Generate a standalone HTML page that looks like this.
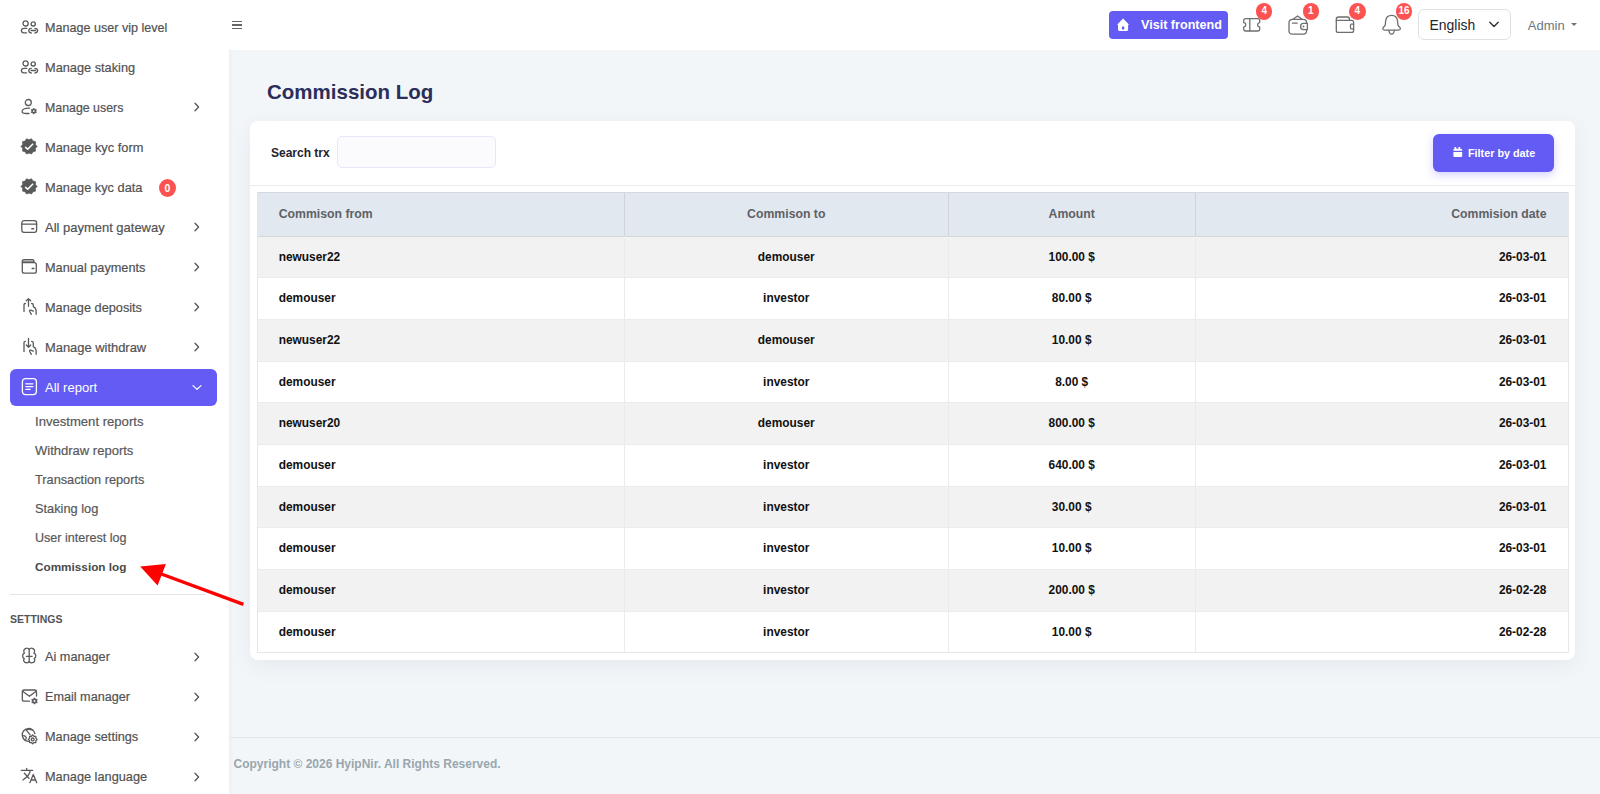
<!DOCTYPE html>
<html><head><meta charset="utf-8"><title>Commission Log</title>
<style>
html,body{margin:0;padding:0;}
body{width:1600px;height:794px;overflow:hidden;position:relative;background:#f3f6f9;font-family:"Liberation Sans", sans-serif;}
.t{position:absolute;white-space:nowrap;}
#sb{position:absolute;left:0;top:0;width:229px;height:794px;background:#fff;box-shadow:1px 0 4px rgba(0,0,0,0.04);}
#hd{position:absolute;left:229px;top:0;width:1371px;height:50px;background:#fff;}
</style></head>
<body>
<div id="sb"></div><div id="hd"></div>
<svg style="position:absolute;left:20px;top:17px;" width="20" height="20" viewBox="0 0 20 20" fill="none"><g stroke="#5a5a5a" stroke-width="1.3" stroke-linecap="round" stroke-linejoin="round">
<circle cx="5.6" cy="6.4" r="2.6"/><circle cx="13.2" cy="6.9" r="2.1"/>
<path d="M6.8 11.3H4Q1.4 11.3 1.4 13.6Q1.4 15.8 4 15.8H6.6"/>
<path d="M11.3 11.3Q8.8 11.3 8.8 13.6Q8.8 16 11.3 16"/>
<path d="M14.9 11.3Q17.6 11.3 17.6 13.6Q17.6 16 14.9 16"/>
<path d="M11.2 13.5H15.6"/></g></svg>
<div class="t" style="left:45px;top:22px;font-size:12.59px;line-height:12.59px;font-weight:400;color:#525252;-webkit-text-stroke:0.2px #525252;">Manage user vip level</div>
<svg style="position:absolute;left:20px;top:57px;" width="20" height="20" viewBox="0 0 20 20" fill="none"><g stroke="#5a5a5a" stroke-width="1.3" stroke-linecap="round" stroke-linejoin="round">
<circle cx="5.6" cy="6.4" r="2.6"/><circle cx="13.2" cy="6.9" r="2.1"/>
<path d="M6.8 11.3H4Q1.4 11.3 1.4 13.6Q1.4 15.8 4 15.8H6.6"/>
<path d="M11.3 11.3Q8.8 11.3 8.8 13.6Q8.8 16 11.3 16"/>
<path d="M14.9 11.3Q17.6 11.3 17.6 13.6Q17.6 16 14.9 16"/>
<path d="M11.2 13.5H15.6"/></g></svg>
<div class="t" style="left:45px;top:62px;font-size:12.78px;line-height:12.78px;font-weight:400;color:#525252;-webkit-text-stroke:0.2px #525252;">Manage staking</div>
<svg style="position:absolute;left:20px;top:97px;" width="20" height="20" viewBox="0 0 20 20" fill="none"><g stroke="#5a5a5a" stroke-width="1.3" stroke-linecap="round" stroke-linejoin="round">
<circle cx="8.3" cy="5.5" r="3"/>
<path d="M9.6 11.2H8.6C4.8 11.2 2.1 12.6 2.1 14.4C2.1 15.8 4.2 16.5 6.5 16.5H9"/>
</g>
<polygon points="13.80,11.00 12.70,12.19 11.12,12.55 11.60,14.10 11.12,15.65 12.70,16.01 13.80,17.20 14.90,16.01 16.48,15.65 16.00,14.10 16.48,12.55 14.90,12.19" fill="#5a5a5a" stroke="#5a5a5a" stroke-width="0.5" stroke-linejoin="round"/><circle cx="13.8" cy="14.1" r="0.9" fill="#fff"/></svg>
<div class="t" style="left:45px;top:102px;font-size:12.36px;line-height:12.36px;font-weight:400;color:#525252;-webkit-text-stroke:0.2px #525252;">Manage users</div>
<svg style="position:absolute;left:192px;top:102px;" width="10" height="10" viewBox="0 0 10 10" fill="none"><path d="M3 1.3L6.6 5L3 8.7" stroke="#555" stroke-width="1.3" stroke-linecap="round" stroke-linejoin="round"/></svg>
<svg style="position:absolute;left:20px;top:137px;" width="20" height="20" viewBox="0 0 20 20" fill="none"><polygon points="17.05,9.40 15.33,7.36 15.52,4.70 12.93,4.06 11.52,1.79 9.05,2.80 6.58,1.79 5.17,4.06 2.58,4.70 2.77,7.36 1.05,9.40 2.77,11.44 2.58,14.10 5.17,14.74 6.58,17.01 9.05,16.00 11.52,17.01 12.93,14.74 15.52,14.10 15.33,11.44" fill="#5a5a5a" stroke="#5a5a5a" stroke-width="0.8" stroke-linejoin="round"/>
<path d="M5.6 10.3L7.7 12.2L12.6 7.2" stroke="#fff" stroke-width="1.6" stroke-linecap="round" stroke-linejoin="round"/></svg>
<div class="t" style="left:45px;top:142px;font-size:12.84px;line-height:12.84px;font-weight:400;color:#525252;-webkit-text-stroke:0.2px #525252;">Manage kyc form</div>
<svg style="position:absolute;left:20px;top:177px;" width="20" height="20" viewBox="0 0 20 20" fill="none"><polygon points="17.05,9.40 15.33,7.36 15.52,4.70 12.93,4.06 11.52,1.79 9.05,2.80 6.58,1.79 5.17,4.06 2.58,4.70 2.77,7.36 1.05,9.40 2.77,11.44 2.58,14.10 5.17,14.74 6.58,17.01 9.05,16.00 11.52,17.01 12.93,14.74 15.52,14.10 15.33,11.44" fill="#5a5a5a" stroke="#5a5a5a" stroke-width="0.8" stroke-linejoin="round"/>
<path d="M5.6 10.3L7.7 12.2L12.6 7.2" stroke="#fff" stroke-width="1.6" stroke-linecap="round" stroke-linejoin="round"/></svg>
<div class="t" style="left:45px;top:182px;font-size:12.8px;line-height:12.8px;font-weight:400;color:#525252;-webkit-text-stroke:0.2px #525252;">Manage kyc data</div>
<svg style="position:absolute;left:20px;top:217px;" width="20" height="20" viewBox="0 0 20 20" fill="none"><g stroke="#5a5a5a" stroke-width="1.3" stroke-linecap="round" stroke-linejoin="round"><rect x="1.8" y="3.7" width="14.8" height="11.6" rx="2.2"/>
<path d="M1.8 7.2H16.6"/><path d="M11.8 11.8H13.6" stroke-width="1.5"/></g></svg>
<div class="t" style="left:45px;top:222px;font-size:12.97px;line-height:12.97px;font-weight:400;color:#525252;-webkit-text-stroke:0.2px #525252;">All payment gateway</div>
<svg style="position:absolute;left:192px;top:222px;" width="10" height="10" viewBox="0 0 10 10" fill="none"><path d="M3 1.3L6.6 5L3 8.7" stroke="#555" stroke-width="1.3" stroke-linecap="round" stroke-linejoin="round"/></svg>
<svg style="position:absolute;left:20px;top:257px;" width="20" height="20" viewBox="0 0 20 20" fill="none"><g stroke="#5a5a5a" stroke-width="1.3" stroke-linecap="round" stroke-linejoin="round">
<path d="M2.3 5.6V14.2Q2.3 16.2 4.3 16.2H14.3Q16.3 16.2 16.3 14.2V7.6Q16.3 5.6 14.3 5.6H2.3"/>
<path d="M2.3 5.6V4.5Q2.3 2.6 4.2 2.6H12.2Q14 2.6 14 4.6V5.6"/>
<path d="M2.6 4.2H13.6" stroke-width="1"/>
<path d="M12.2 11.5H13.9" stroke-width="1.5"/></g></svg>
<div class="t" style="left:45px;top:262px;font-size:12.72px;line-height:12.72px;font-weight:400;color:#525252;-webkit-text-stroke:0.2px #525252;">Manual payments</div>
<svg style="position:absolute;left:192px;top:262px;" width="10" height="10" viewBox="0 0 10 10" fill="none"><path d="M3 1.3L6.6 5L3 8.7" stroke="#555" stroke-width="1.3" stroke-linecap="round" stroke-linejoin="round"/></svg>
<svg style="position:absolute;left:20px;top:297px;" width="20" height="20" viewBox="0 0 20 20" fill="none"><g stroke="#5a5a5a" stroke-width="1.3" stroke-linecap="round" stroke-linejoin="round"><path d="M8.5 9.3V1.8M6.3 3.8L8.5 1.6L10.7 3.8"/>
<path d="M5.4 6.5Q4 6.5 4 7.7V14.6"/>
<path d="M11.6 6.5Q13.3 6.5 13.3 8.3V9.6Q16 11 16.1 13.2V17.3"/>
<path d="M13.3 14.2L10.8 13.1Q9.3 12.8 9.6 14.3L11.3 17.4"/></g></svg>
<div class="t" style="left:45px;top:302px;font-size:12.74px;line-height:12.74px;font-weight:400;color:#525252;-webkit-text-stroke:0.2px #525252;">Manage deposits</div>
<svg style="position:absolute;left:192px;top:302px;" width="10" height="10" viewBox="0 0 10 10" fill="none"><path d="M3 1.3L6.6 5L3 8.7" stroke="#555" stroke-width="1.3" stroke-linecap="round" stroke-linejoin="round"/></svg>
<svg style="position:absolute;left:20px;top:337px;" width="20" height="20" viewBox="0 0 20 20" fill="none"><g stroke="#5a5a5a" stroke-width="1.3" stroke-linecap="round" stroke-linejoin="round"><path d="M8.5 1.5V10.1M6.3 8.0L8.5 10.2L10.7 8.0"/>
<path d="M5.4 4.3Q4 4.3 4 5.5V14.6"/>
<path d="M11.6 4.3Q13.3 4.3 13.3 6.1V9.6Q16 11 16.1 13.2V17.3"/>
<path d="M13.3 14.2L10.8 13.1Q9.3 12.8 9.6 14.3L11.3 17.4"/></g></svg>
<div class="t" style="left:45px;top:342px;font-size:12.91px;line-height:12.91px;font-weight:400;color:#525252;-webkit-text-stroke:0.2px #525252;">Manage withdraw</div>
<svg style="position:absolute;left:192px;top:342px;" width="10" height="10" viewBox="0 0 10 10" fill="none"><path d="M3 1.3L6.6 5L3 8.7" stroke="#555" stroke-width="1.3" stroke-linecap="round" stroke-linejoin="round"/></svg>
<div style="position:absolute;left:159px;top:179px;width:17px;height:18px;border-radius:50%;background:#fd5252;"></div>
<div class="t" style="left:159px;top:183px;font-size:10.5px;line-height:10.5px;font-weight:700;color:#fff;width:17px;text-align:center;">0</div>
<div style="position:absolute;left:10px;top:369px;width:207px;height:36.5px;border-radius:6px;background:#635bf4;"></div>
<svg style="position:absolute;left:20px;top:377px;" width="20" height="20" viewBox="0 0 20 20" fill="none"><g stroke="#fff" stroke-width="1.3" stroke-linecap="round" stroke-linejoin="round">
<rect x="2.4" y="1.6" width="14" height="16" rx="3"/>
<path d="M5.8 6.8H12.9M5.8 9.6H12.9M5.8 12.3H10.2"/></g></svg>
<div class="t" style="left:45px;top:381px;font-size:13.05px;line-height:13.05px;font-weight:400;color:#fff;">All report</div>
<svg style="position:absolute;left:190px;top:382px;" width="14" height="10" viewBox="0 0 14 10" fill="none"><path d="M3 3.6L7 7.4L11 3.6" stroke="#fff" stroke-width="1.3" stroke-linecap="round" stroke-linejoin="round"/></svg>
<div class="t" style="left:35px;top:415px;font-size:13.1px;line-height:13.1px;font-weight:400;color:#585858;-webkit-text-stroke:0.2px #585858;">Investment reports</div>
<div class="t" style="left:35px;top:444px;font-size:13.03px;line-height:13.03px;font-weight:400;color:#585858;-webkit-text-stroke:0.2px #585858;">Withdraw reports</div>
<div class="t" style="left:35px;top:474px;font-size:12.75px;line-height:12.75px;font-weight:400;color:#585858;-webkit-text-stroke:0.2px #585858;">Transaction reports</div>
<div class="t" style="left:35px;top:503px;font-size:12.79px;line-height:12.79px;font-weight:400;color:#585858;-webkit-text-stroke:0.2px #585858;">Staking log</div>
<div class="t" style="left:35px;top:532px;font-size:12.57px;line-height:12.57px;font-weight:400;color:#585858;-webkit-text-stroke:0.2px #585858;">User interest log</div>
<div class="t" style="left:35px;top:561px;font-size:11.76px;line-height:11.76px;font-weight:700;color:#4a4a4a;">Commission log</div>
<div style="position:absolute;left:10px;top:594px;width:195px;height:1px;background:#e4e4e4;"></div>
<div class="t" style="left:10px;top:614px;font-size:10.5px;line-height:10.5px;font-weight:700;color:#555;letter-spacing:0px;">SETTINGS</div>
<svg style="position:absolute;left:20px;top:645.0px;" width="20" height="20" viewBox="0 0 20 20" fill="none"><g stroke="#5a5a5a" stroke-width="1.3" stroke-linecap="round" stroke-linejoin="round" stroke-width="1.35">
<path d="M9.2 4.4C8.4 3.2 6.6 2.9 5.4 3.6C3.6 4.6 3.2 6.6 4.5 8.2C2.3 8.9 1.7 12.2 4.3 13.5C3.0 14.9 3.6 17.5 6.0 17.7C7.2 18 8.6 17.7 9.2 16.7"/>
<path d="M9.2 4.4C10 3.2 11.8 2.9 13 3.6C14.8 4.6 15.2 6.6 13.9 8.2C16.1 8.9 16.7 12.2 14.1 13.5C15.4 14.9 14.8 17.5 12.4 17.7C11.2 18 9.8 17.7 9.2 16.7"/>
<path d="M9.2 4.4V16.7M6.4 11.4H12.1"/></g></svg>
<div class="t" style="left:45px;top:651px;font-size:12.69px;line-height:12.69px;font-weight:400;color:#525252;-webkit-text-stroke:0.2px #525252;">Ai manager</div>
<svg style="position:absolute;left:192px;top:651.8px;" width="10" height="10" viewBox="0 0 10 10" fill="none"><path d="M3 1.3L6.6 5L3 8.7" stroke="#555" stroke-width="1.3" stroke-linecap="round" stroke-linejoin="round"/></svg>
<svg style="position:absolute;left:20px;top:685.0px;" width="20" height="20" viewBox="0 0 20 20" fill="none"><g stroke="#5a5a5a" stroke-width="1.3" stroke-linecap="round" stroke-linejoin="round" stroke-width="1.4">
<path d="M9.6 16.1H4Q2.3 16.1 2.3 14.4V6.7Q2.3 5 4 5H14.8Q16.5 5 16.5 6.7V11"/>
<path d="M2.6 6.2L9.4 11.3L16.2 6.2"/></g>
<polygon points="14.50,12.70 13.35,14.01 11.64,14.35 12.20,16.00 11.64,17.65 13.35,17.99 14.50,19.30 15.65,17.99 17.36,17.65 16.80,16.00 17.36,14.35 15.65,14.01" fill="#5a5a5a" stroke="#5a5a5a" stroke-width="0.5" stroke-linejoin="round"/><circle cx="14.5" cy="16" r="0.9" fill="#fff"/></svg>
<div class="t" style="left:45px;top:691px;font-size:12.65px;line-height:12.65px;font-weight:400;color:#525252;-webkit-text-stroke:0.2px #525252;">Email manager</div>
<svg style="position:absolute;left:192px;top:691.8px;" width="10" height="10" viewBox="0 0 10 10" fill="none"><path d="M3 1.3L6.6 5L3 8.7" stroke="#555" stroke-width="1.3" stroke-linecap="round" stroke-linejoin="round"/></svg>
<svg style="position:absolute;left:20px;top:725.0px;" width="20" height="20" viewBox="0 0 20 20" fill="none"><g stroke="#5a5a5a" stroke-width="1.3" stroke-linecap="round" stroke-linejoin="round" stroke-width="1.2">
<path d="M8.4 16.3A6.4 6.4 0 1 1 14.9 8.6"/>
<path d="M5.6 4.4L10.2 9.8"/><path d="M6.8 4.8Q9 3.8 12.8 5.2"/>
<path d="M3 10.8Q4.8 10 6.2 12.5Q6.6 14 5 15"/>
<polygon points="12.70,10.00 11.40,11.26 9.59,11.29 9.56,13.10 8.30,14.40 9.56,15.70 9.59,17.51 11.40,17.54 12.70,18.80 14.00,17.54 15.81,17.51 15.84,15.70 17.10,14.40 15.84,13.10 15.81,11.29 14.00,11.26" fill="#fff"/>
<circle cx="12.7" cy="14.4" r="1.4"/></g></svg>
<div class="t" style="left:45px;top:731px;font-size:12.71px;line-height:12.71px;font-weight:400;color:#525252;-webkit-text-stroke:0.2px #525252;">Manage settings</div>
<svg style="position:absolute;left:192px;top:731.8px;" width="10" height="10" viewBox="0 0 10 10" fill="none"><path d="M3 1.3L6.6 5L3 8.7" stroke="#555" stroke-width="1.3" stroke-linecap="round" stroke-linejoin="round"/></svg>
<svg style="position:absolute;left:20px;top:765.0px;" width="20" height="20" viewBox="0 0 20 20" fill="none"><g stroke="#5a5a5a" stroke-width="1.3" stroke-linecap="round" stroke-linejoin="round" stroke-width="1.4">
<path d="M1.3 5.4H12.6M6.7 3.3V5.4"/>
<path d="M10.2 5.6Q9.8 10.2 2.9 15"/><path d="M4.4 8.3L9 13.2"/>
<path d="M9.9 17.7L13.3 9.4L16.7 17.7M10.9 15H15.7"/></g></svg>
<div class="t" style="left:45px;top:771px;font-size:12.76px;line-height:12.76px;font-weight:400;color:#525252;-webkit-text-stroke:0.2px #525252;">Manage language</div>
<svg style="position:absolute;left:192px;top:771.8px;" width="10" height="10" viewBox="0 0 10 10" fill="none"><path d="M3 1.3L6.6 5L3 8.7" stroke="#555" stroke-width="1.3" stroke-linecap="round" stroke-linejoin="round"/></svg>
<div style="position:absolute;left:231.5px;top:20.5px;width:10px;height:1.2px;background:#666;"></div>
<div style="position:absolute;left:231.5px;top:24.4px;width:10px;height:1.2px;background:#666;"></div>
<div style="position:absolute;left:231.5px;top:28.1px;width:10px;height:1.2px;background:#666;"></div>
<div style="position:absolute;left:1109px;top:11px;width:119px;height:27.7px;border-radius:4px;background:#635bf4;"></div>
<svg style="position:absolute;left:1112px;top:14px;" width="22" height="22" viewBox="0 0 22 22" fill="none"><path d="M11.1 4.6L5 10.7H6V15.6Q6 16.9 7.3 16.9H14.9Q16.1 16.9 16.1 15.6V10.7H17.2Z" fill="#fff"/><ellipse cx="11.1" cy="14" rx="1.3" ry="1.7" fill="#635bf4"/></svg>
<div class="t" style="left:1141px;top:19px;font-size:12.6px;line-height:12.6px;font-weight:700;color:#fff;">Visit frontend</div>
<svg style="position:absolute;left:1240px;top:14px;" width="24" height="20" viewBox="0 0 24 20" fill="none"><path d="M5.6 4.6H17.8Q19.7 4.6 19.7 6.5V8.5Q17.6 8.9 17.6 10.8Q17.6 12.7 19.7 13.1V15.1Q19.7 17 17.8 17H5.6Q3.7 17 3.7 15.1V13.1Q5.8 12.7 5.8 10.8Q5.8 8.9 3.7 8.5V6.5Q3.7 4.6 5.6 4.6Z" stroke="#6e6e6e" stroke-width="1.3" stroke-linecap="round" stroke-linejoin="round"/><path d="M9.8 4.8V16.8" stroke="#6e6e6e" stroke-width="1.3" stroke-linecap="round" stroke-linejoin="round"/></svg>
<svg style="position:absolute;left:1286px;top:12px;" width="24" height="24" viewBox="0 0 24 24" fill="none"><path d="M6.8 7.4H17.2Q20.6 7.4 20.6 10.8V18.8Q20.6 22.2 17.2 22.2H6.4Q3 22.2 3 18.8V10.8Q3 7.4 6.8 7.4Z" stroke="#6e6e6e" stroke-width="1.3" stroke-linecap="round" stroke-linejoin="round"/><path d="M7 7.2L11.6 4L16.1 7.2" stroke="#6e6e6e" stroke-width="1.3" stroke-linecap="round" stroke-linejoin="round"/><path d="M6.4 11.1H11.2" stroke="#6e6e6e" stroke-width="1.3" stroke-linecap="round" stroke-linejoin="round" stroke-width="1.5"/><path d="M21.4 11.4H17.4Q14.6 11.4 14.6 14.5Q14.6 17.6 17.4 17.6H21.4Z" stroke="#6e6e6e" stroke-width="1.3" stroke-linecap="round" stroke-linejoin="round" fill="#fff"/><circle cx="17.5" cy="14.5" r="0.9" fill="#6e6e6e"/></svg>
<svg style="position:absolute;left:1332px;top:12px;" width="24" height="24" viewBox="0 0 24 24" fill="none"><path d="M4.3 8.4V7.2Q4.3 5 6.5 5H15.3Q17.5 5 17.5 7.2V8.4" stroke="#6e6e6e" stroke-width="1.3" stroke-linecap="round" stroke-linejoin="round"/><path d="M4.3 8.4H19.6Q21.6 8.4 21.6 10.4V18.4Q21.6 20.4 19.6 20.4H6.3Q4.3 20.4 4.3 18.4V8.4Z" stroke="#6e6e6e" stroke-width="1.3" stroke-linecap="round" stroke-linejoin="round"/><path d="M21.6 12.2H19Q18.4 12.2 18.4 14.5Q18.4 16.8 19 16.8H21.6" stroke="#6e6e6e" stroke-width="1.3" stroke-linecap="round" stroke-linejoin="round"/></svg>
<svg style="position:absolute;left:1378px;top:12px;" width="24" height="24" viewBox="0 0 24 24" fill="none"><path d="M13.6 3.4C10 3.4 8 6 7.6 9.2L7.3 12.6C7.1 14.4 4.8 15 4.8 16.6C4.8 17.6 5.5 18.1 6.5 18.1H20.7C21.7 18.1 22.4 17.6 22.4 16.6C22.4 15 20.1 14.4 19.9 12.6L19.6 9.2C19.2 6 17.2 3.4 13.6 3.4Z" stroke="#6e6e6e" stroke-width="1.3" stroke-linecap="round" stroke-linejoin="round"/><path d="M10.9 18.3Q11.3 22.2 13.6 22.2Q15.9 22.2 16.3 18.3" stroke="#6e6e6e" stroke-width="1.3" stroke-linecap="round" stroke-linejoin="round"/></svg>
<div style="position:absolute;left:1255.9px;top:3.1px;width:16.6px;height:16.6px;border-radius:50%;background:#fd5252;"></div>
<div class="t" style="left:1255.9px;top:6px;font-size:10px;line-height:10px;font-weight:700;color:#fff;width:16.6px;text-align:center;">4</div>
<div style="position:absolute;left:1302.5px;top:3.1px;width:16.6px;height:16.6px;border-radius:50%;background:#fd5252;"></div>
<div class="t" style="left:1302.5px;top:6px;font-size:10px;line-height:10px;font-weight:700;color:#fff;width:16.6px;text-align:center;">1</div>
<div style="position:absolute;left:1349.1px;top:3.1px;width:16.6px;height:16.6px;border-radius:50%;background:#fd5252;"></div>
<div class="t" style="left:1349.1000000000001px;top:6px;font-size:10px;line-height:10px;font-weight:700;color:#fff;width:16.6px;text-align:center;">4</div>
<div style="position:absolute;left:1395.8px;top:3.1px;width:16.6px;height:16.6px;border-radius:50%;background:#fd5252;"></div>
<div class="t" style="left:1395.8px;top:6px;font-size:10px;line-height:10px;font-weight:700;color:#fff;width:16.6px;text-align:center;">16</div>
<div style="position:absolute;left:1418.3px;top:9.3px;width:93.2px;height:31.1px;box-sizing:border-box;border:1px solid #dee2e6;border-radius:6px;background:#fff;"></div>
<div class="t" style="left:1429.6px;top:19px;font-size:13.9px;line-height:13.9px;font-weight:400;color:#212529;">English</div>
<svg style="position:absolute;left:1487px;top:19px;" width="14" height="12" viewBox="0 0 14 12" fill="none"><path d="M2.8 3.3L7 7.6L11.2 3.3" stroke="#333" stroke-width="1.4" stroke-linecap="round" stroke-linejoin="round"/></svg>
<div class="t" style="left:1527.8px;top:19px;font-size:13px;line-height:13px;font-weight:400;color:#6c757d;">Admin</div>
<div style="position:absolute;left:1571px;top:22.6px;width:0;height:0;border-left:3.2px solid transparent;border-right:3.2px solid transparent;border-top:3.6px solid #6c757d;"></div>
<div class="t" style="left:267px;top:82px;font-size:20.5px;line-height:20.5px;font-weight:700;color:#2b2e5a;">Commission Log</div>
<div style="position:absolute;left:250px;top:121px;width:1325px;height:538.5px;background:#fff;border-radius:8px;box-shadow:0 6px 22px rgba(40,50,90,0.07);"></div>
<div class="t" style="left:271px;top:147px;font-size:12px;line-height:12px;font-weight:700;color:#23232f;">Search trx</div>
<div style="position:absolute;left:337px;top:136px;width:159.4px;height:32.4px;box-sizing:border-box;border:1px solid #e7e5fb;border-radius:5px;background:#fbfbfe;"></div>
<div style="position:absolute;left:1433px;top:134px;width:121px;height:38px;border-radius:6px;background:#635bf4;box-shadow:0 3px 8px rgba(99,91,244,0.28);"></div>
<svg style="position:absolute;left:1448px;top:142px;" width="20" height="20" viewBox="0 0 20 20" fill="none"><path d="M6.4 6.9V5.6Q6.4 5 7 5H7.7Q8.3 5 8.3 5.6V6.8H10.4V5.6Q10.4 5 11 5H11.7Q12.3 5 12.3 5.6V6.9H13.3Q14.2 6.9 14.2 7.8V8.8H5.4V7.8Q5.4 6.9 6.3 6.9Z" fill="#fff"/><path d="M5.4 10.1H14.2V13.9Q14.2 14.9 13.2 14.9H6.4Q5.4 14.9 5.4 13.9Z" fill="#fff"/></svg>
<div class="t" style="left:1468px;top:148px;font-size:10.8px;line-height:10.8px;font-weight:700;color:#fff;">Filter by date</div>
<div style="position:absolute;left:250px;top:185px;width:1325px;height:1px;background:#ebebeb;"></div>
<div style="position:absolute;left:257px;top:192.5px;width:1311px;height:43.5px;background:#e2e8f0;"></div>
<div style="position:absolute;left:257px;top:236.00px;width:1311px;height:41.67px;background:#f2f2f2;"></div>
<div style="position:absolute;left:257px;top:277.67px;width:1311px;height:41.67px;background:#fff;"></div>
<div style="position:absolute;left:257px;top:277.17px;width:1311px;height:1px;background:#ececec;"></div>
<div style="position:absolute;left:257px;top:319.34px;width:1311px;height:41.67px;background:#f2f2f2;"></div>
<div style="position:absolute;left:257px;top:318.84px;width:1311px;height:1px;background:#ececec;"></div>
<div style="position:absolute;left:257px;top:361.01px;width:1311px;height:41.67px;background:#fff;"></div>
<div style="position:absolute;left:257px;top:360.51px;width:1311px;height:1px;background:#ececec;"></div>
<div style="position:absolute;left:257px;top:402.68px;width:1311px;height:41.67px;background:#f2f2f2;"></div>
<div style="position:absolute;left:257px;top:402.18px;width:1311px;height:1px;background:#ececec;"></div>
<div style="position:absolute;left:257px;top:444.35px;width:1311px;height:41.67px;background:#fff;"></div>
<div style="position:absolute;left:257px;top:443.85px;width:1311px;height:1px;background:#ececec;"></div>
<div style="position:absolute;left:257px;top:486.02px;width:1311px;height:41.67px;background:#f2f2f2;"></div>
<div style="position:absolute;left:257px;top:485.52px;width:1311px;height:1px;background:#ececec;"></div>
<div style="position:absolute;left:257px;top:527.69px;width:1311px;height:41.67px;background:#fff;"></div>
<div style="position:absolute;left:257px;top:527.19px;width:1311px;height:1px;background:#ececec;"></div>
<div style="position:absolute;left:257px;top:569.36px;width:1311px;height:41.67px;background:#f2f2f2;"></div>
<div style="position:absolute;left:257px;top:568.86px;width:1311px;height:1px;background:#ececec;"></div>
<div style="position:absolute;left:257px;top:611.03px;width:1311px;height:41.67px;background:#fff;"></div>
<div style="position:absolute;left:257px;top:610.53px;width:1311px;height:1px;background:#ececec;"></div>
<div style="position:absolute;left:257px;top:235.5px;width:1311px;height:1px;background:#d4d6d9;"></div>
<div style="position:absolute;left:256.5px;top:192px;width:1312px;height:461px;box-sizing:border-box;border:1px solid #e6e6e6;border-top-color:#d6d8db;"></div>
<div style="position:absolute;left:624.0px;top:193px;width:1px;height:43px;background:#d0d3d8;"></div>
<div style="position:absolute;left:624.0px;top:236px;width:1px;height:416px;background:#ebebeb;"></div>
<div style="position:absolute;left:947.5px;top:193px;width:1px;height:43px;background:#d0d3d8;"></div>
<div style="position:absolute;left:947.5px;top:236px;width:1px;height:416px;background:#ebebeb;"></div>
<div style="position:absolute;left:1194.9px;top:193px;width:1px;height:43px;background:#d0d3d8;"></div>
<div style="position:absolute;left:1194.9px;top:236px;width:1px;height:416px;background:#ebebeb;"></div>
<div class="t" style="left:278.7px;top:208px;font-size:12.25px;line-height:12.25px;font-weight:700;color:#5e6165;">Commison from</div>
<div class="t" style="left:624.5px;top:208px;font-size:12.25px;line-height:12.25px;font-weight:700;color:#5e6165;width:323.5px;text-align:center;">Commison to</div>
<div class="t" style="left:948px;top:208px;font-size:12.25px;line-height:12.25px;font-weight:700;color:#5e6165;width:247.4000000000001px;text-align:center;">Amount</div>
<div class="t" style="left:1195.4px;top:208px;font-size:12.25px;line-height:12.25px;font-weight:700;color:#5e6165;width:351.0999999999999px;text-align:right;">Commision date</div>
<div class="t" style="left:278.7px;top:252px;font-size:11.9px;line-height:11.9px;font-weight:700;color:#111;">newuser22</div>
<div class="t" style="left:624.5px;top:252px;font-size:11.9px;line-height:11.9px;font-weight:700;color:#111;width:323.5px;text-align:center;">demouser</div>
<div class="t" style="left:948px;top:252px;font-size:11.9px;line-height:11.9px;font-weight:700;color:#111;width:247.4000000000001px;text-align:center;">100.00 $</div>
<div class="t" style="left:1195.4px;top:252px;font-size:11.9px;line-height:11.9px;font-weight:700;color:#111;width:351.0999999999999px;text-align:right;">26-03-01</div>
<div class="t" style="left:278.7px;top:293px;font-size:11.9px;line-height:11.9px;font-weight:700;color:#111;">demouser</div>
<div class="t" style="left:624.5px;top:293px;font-size:11.9px;line-height:11.9px;font-weight:700;color:#111;width:323.5px;text-align:center;">investor</div>
<div class="t" style="left:948px;top:293px;font-size:11.9px;line-height:11.9px;font-weight:700;color:#111;width:247.4000000000001px;text-align:center;">80.00 $</div>
<div class="t" style="left:1195.4px;top:293px;font-size:11.9px;line-height:11.9px;font-weight:700;color:#111;width:351.0999999999999px;text-align:right;">26-03-01</div>
<div class="t" style="left:278.7px;top:335px;font-size:11.9px;line-height:11.9px;font-weight:700;color:#111;">newuser22</div>
<div class="t" style="left:624.5px;top:335px;font-size:11.9px;line-height:11.9px;font-weight:700;color:#111;width:323.5px;text-align:center;">demouser</div>
<div class="t" style="left:948px;top:335px;font-size:11.9px;line-height:11.9px;font-weight:700;color:#111;width:247.4000000000001px;text-align:center;">10.00 $</div>
<div class="t" style="left:1195.4px;top:335px;font-size:11.9px;line-height:11.9px;font-weight:700;color:#111;width:351.0999999999999px;text-align:right;">26-03-01</div>
<div class="t" style="left:278.7px;top:377px;font-size:11.9px;line-height:11.9px;font-weight:700;color:#111;">demouser</div>
<div class="t" style="left:624.5px;top:377px;font-size:11.9px;line-height:11.9px;font-weight:700;color:#111;width:323.5px;text-align:center;">investor</div>
<div class="t" style="left:948px;top:377px;font-size:11.9px;line-height:11.9px;font-weight:700;color:#111;width:247.4000000000001px;text-align:center;">8.00 $</div>
<div class="t" style="left:1195.4px;top:377px;font-size:11.9px;line-height:11.9px;font-weight:700;color:#111;width:351.0999999999999px;text-align:right;">26-03-01</div>
<div class="t" style="left:278.7px;top:418px;font-size:11.9px;line-height:11.9px;font-weight:700;color:#111;">newuser20</div>
<div class="t" style="left:624.5px;top:418px;font-size:11.9px;line-height:11.9px;font-weight:700;color:#111;width:323.5px;text-align:center;">demouser</div>
<div class="t" style="left:948px;top:418px;font-size:11.9px;line-height:11.9px;font-weight:700;color:#111;width:247.4000000000001px;text-align:center;">800.00 $</div>
<div class="t" style="left:1195.4px;top:418px;font-size:11.9px;line-height:11.9px;font-weight:700;color:#111;width:351.0999999999999px;text-align:right;">26-03-01</div>
<div class="t" style="left:278.7px;top:460px;font-size:11.9px;line-height:11.9px;font-weight:700;color:#111;">demouser</div>
<div class="t" style="left:624.5px;top:460px;font-size:11.9px;line-height:11.9px;font-weight:700;color:#111;width:323.5px;text-align:center;">investor</div>
<div class="t" style="left:948px;top:460px;font-size:11.9px;line-height:11.9px;font-weight:700;color:#111;width:247.4000000000001px;text-align:center;">640.00 $</div>
<div class="t" style="left:1195.4px;top:460px;font-size:11.9px;line-height:11.9px;font-weight:700;color:#111;width:351.0999999999999px;text-align:right;">26-03-01</div>
<div class="t" style="left:278.7px;top:502px;font-size:11.9px;line-height:11.9px;font-weight:700;color:#111;">demouser</div>
<div class="t" style="left:624.5px;top:502px;font-size:11.9px;line-height:11.9px;font-weight:700;color:#111;width:323.5px;text-align:center;">investor</div>
<div class="t" style="left:948px;top:502px;font-size:11.9px;line-height:11.9px;font-weight:700;color:#111;width:247.4000000000001px;text-align:center;">30.00 $</div>
<div class="t" style="left:1195.4px;top:502px;font-size:11.9px;line-height:11.9px;font-weight:700;color:#111;width:351.0999999999999px;text-align:right;">26-03-01</div>
<div class="t" style="left:278.7px;top:543px;font-size:11.9px;line-height:11.9px;font-weight:700;color:#111;">demouser</div>
<div class="t" style="left:624.5px;top:543px;font-size:11.9px;line-height:11.9px;font-weight:700;color:#111;width:323.5px;text-align:center;">investor</div>
<div class="t" style="left:948px;top:543px;font-size:11.9px;line-height:11.9px;font-weight:700;color:#111;width:247.4000000000001px;text-align:center;">10.00 $</div>
<div class="t" style="left:1195.4px;top:543px;font-size:11.9px;line-height:11.9px;font-weight:700;color:#111;width:351.0999999999999px;text-align:right;">26-03-01</div>
<div class="t" style="left:278.7px;top:585px;font-size:11.9px;line-height:11.9px;font-weight:700;color:#111;">demouser</div>
<div class="t" style="left:624.5px;top:585px;font-size:11.9px;line-height:11.9px;font-weight:700;color:#111;width:323.5px;text-align:center;">investor</div>
<div class="t" style="left:948px;top:585px;font-size:11.9px;line-height:11.9px;font-weight:700;color:#111;width:247.4000000000001px;text-align:center;">200.00 $</div>
<div class="t" style="left:1195.4px;top:585px;font-size:11.9px;line-height:11.9px;font-weight:700;color:#111;width:351.0999999999999px;text-align:right;">26-02-28</div>
<div class="t" style="left:278.7px;top:627px;font-size:11.9px;line-height:11.9px;font-weight:700;color:#111;">demouser</div>
<div class="t" style="left:624.5px;top:627px;font-size:11.9px;line-height:11.9px;font-weight:700;color:#111;width:323.5px;text-align:center;">investor</div>
<div class="t" style="left:948px;top:627px;font-size:11.9px;line-height:11.9px;font-weight:700;color:#111;width:247.4000000000001px;text-align:center;">10.00 $</div>
<div class="t" style="left:1195.4px;top:627px;font-size:11.9px;line-height:11.9px;font-weight:700;color:#111;width:351.0999999999999px;text-align:right;">26-02-28</div>
<div style="position:absolute;left:229px;top:737px;width:1371px;height:1px;background:#e4e8ec;"></div>
<div class="t" style="left:233.5px;top:758px;font-size:12px;line-height:12px;font-weight:700;color:#98a6ad;">Copyright © 2026 HyipNir. All Rights Reserved.</div>
<svg style="position:absolute;left:0;top:0" width="1600" height="794"><line x1="243.4" y1="604.4" x2="160" y2="573.5" stroke="#ff0000" stroke-width="3.4"/><polygon points="140.2,566.6 165.9,564 157.6,585.5" fill="#ff0000"/></svg>
</body></html>
